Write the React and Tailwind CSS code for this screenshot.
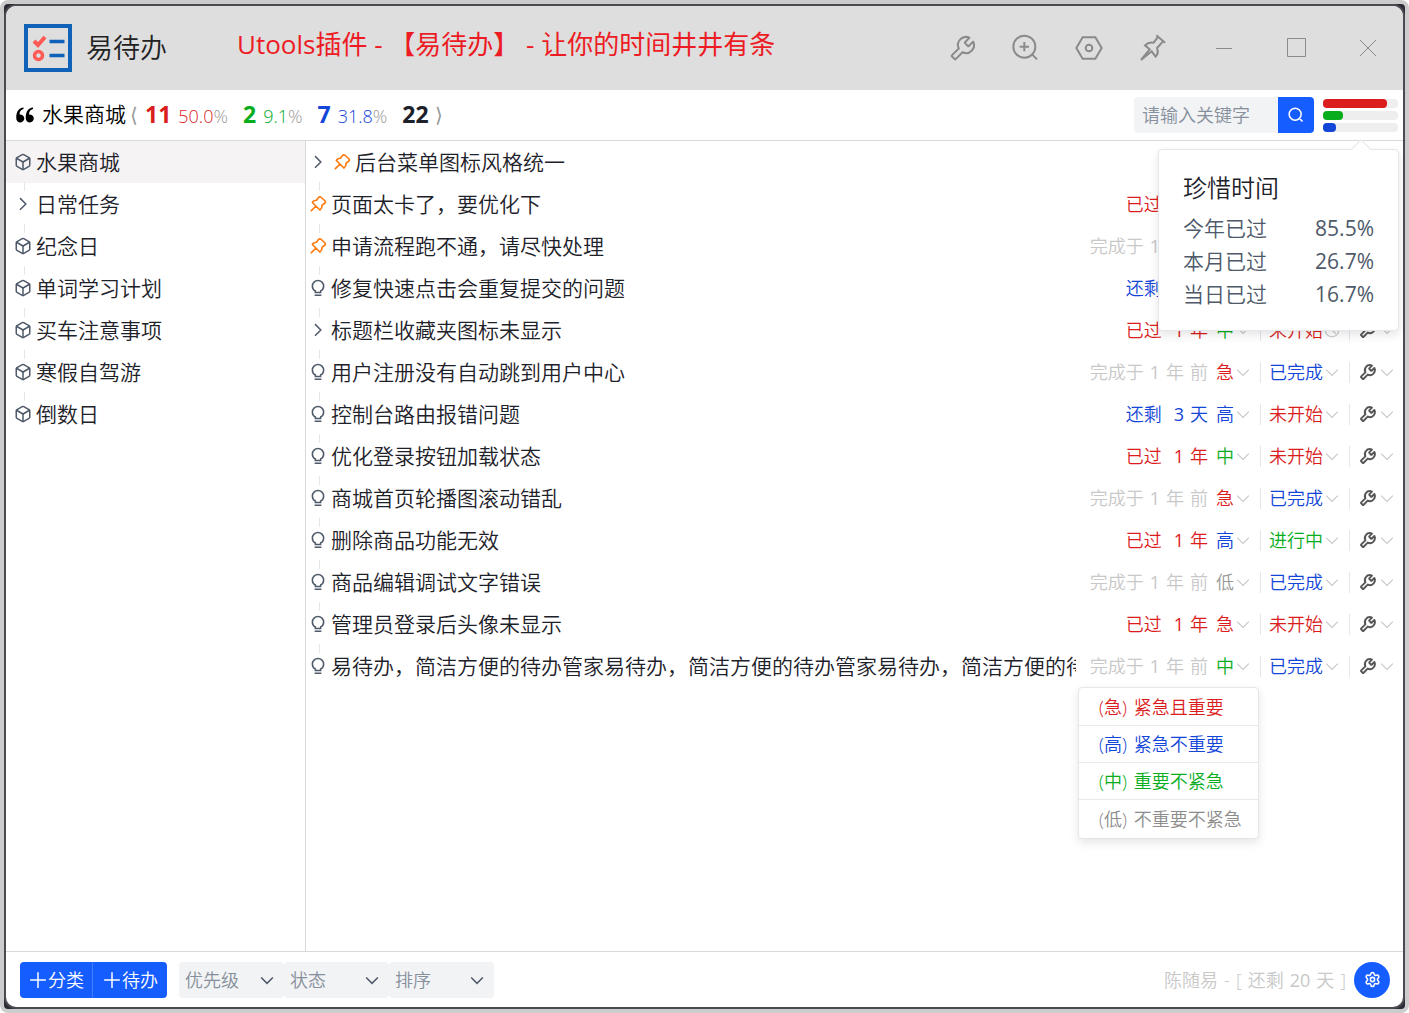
import { Box, Settings } from 'lucide-react';

const VERMELHO = 'text-[#db1d1d]';
const AZUL = 'text-[#1346d8]';
const VERDE = 'text-[#07ad1c]';
const CINZA = 'text-[#999]';

const categories = [
  { name: '水果商城', active: true },
  { name: '日常任务', open: true },
  { name: '纪念日' },
  { name: '单词学习计划' },
  { name: '买车注意事项' },
  { name: '寒假自驾游' },
  { name: '倒数日' },
];

const prioColors = { 急: VERMELHO, 高: AZUL, 中: VERDE, 低: CINZA };
const statusColors = { 未开始: VERMELHO, 已完成: AZUL, 进行中: VERDE };

const todos = [
  { title: '后台菜单图标风格统一', icon: 'right', pin: true },
  { title: '页面太卡了，要优化下', icon: 'pin', time: 'past', prio: '急', status: '未开始' },
  { title: '申请流程跑不通，请尽快处理', icon: 'pin', time: 'done', prio: '急', status: '已完成' },
  { title: '修复快速点击会重复提交的问题', icon: 'bulb', time: 'left', prio: '高', status: '未开始' },
  { title: '标题栏收藏夹图标未显示', icon: 'right', time: 'past', prio: '中', status: '未开始', clock: true },
  { title: '用户注册没有自动跳到用户中心', icon: 'bulb', time: 'done', prio: '急', status: '已完成' },
  { title: '控制台路由报错问题', icon: 'bulb', time: 'left', prio: '高', status: '未开始' },
  { title: '优化登录按钮加载状态', icon: 'bulb', time: 'past', prio: '中', status: '未开始' },
  { title: '商城首页轮播图滚动错乱', icon: 'bulb', time: 'done', prio: '急', status: '已完成' },
  { title: '删除商品功能无效', icon: 'bulb', time: 'past', prio: '高', status: '进行中' },
  { title: '商品编辑调试文字错误', icon: 'bulb', time: 'done', prio: '低', status: '已完成' },
  { title: '管理员登录后头像未显示', icon: 'bulb', time: 'past', prio: '急', status: '未开始' },
  {
    title: '易待办，简洁方便的待办管家易待办，简洁方便的待办管家易待办，简洁方便的待办管家',
    icon: 'bulb', time: 'done', prio: '中', status: '已完成', menu: true,
  },
];

const times = {
  past: { style: VERMELHO, label: '已过', count: '1', unit: '年' },
  left: { style: AZUL, label: '还剩', count: '3', unit: '天' },
  done: { style: 'text-[#c8c8c8]', label: '完成于', count: '1', unit: '年', suffix: '前' },
};

const prioMenu = [
  { key: '(急)', label: '紧急且重要', color: VERMELHO },
  { key: '(高)', label: '紧急不重要', color: AZUL },
  { key: '(中)', label: '重要不紧急', color: VERDE },
  { key: '(低)', label: '不重要不紧急', color: 'text-[#8c8c8c]' },
];

function Svg({ className, width = 4, children }) {
  return (
    <svg viewBox="0 0 48 48" fill="none" stroke="currentColor" strokeWidth={width} className={`shrink-0 ${className}`}>
      {children}
    </svg>
  );
}

const Tool = ({ className, width }) => (
  <Svg className={className} width={width}>
    <path d="M19.994 11.035c3.66-3.659 9.094-4.46 13.531-2.405a.1.1 0 0 1 .028.16l-6.488 6.488a1 1 0 0 0 0 1.414l4.243 4.243a1 1 0 0 0 1.414 0l6.488-6.488a.1.1 0 0 1 .16.028c2.056 4.437 1.254 9.872-2.405 13.53-3.695 3.696-9.2 4.477-13.66 2.347L12.923 40.735a1 1 0 0 1-1.414 0L7.266 36.49a1 1 0 0 1 0-1.414l10.382-10.382c-2.13-4.46-1.349-9.965 2.346-13.66Z" />
  </Svg>
);

const Pin = () => (
  <Svg className="size-[18px] text-[#ff7a0f]" width={4.500}>
    <path d="M9 20c2-5 7-6 11-6l5-7q3-3 7-1l11 10q2 3-1 6l-7 5c0 5-2 10-6 13L9 20ZM18 30 5 43" strokeLinejoin="round" />
  </Svg>
);

const Bulb = () => (
  <Svg className="size-[18px] text-[#4e5969]">
    <path d="M15 43h18M17 36v-4c-5-3-8-8-8-13a15 15 0 0 1 30 0c0 5-3 10-8 13v4H17Z" />
  </Svg>
);

const Right = () => (
  <Svg className="size-[18px] text-[#4e5969]">
    <path d="m16 39.513 15.556-15.557L16 8.400" />
  </Svg>
);

const Down = ({ className = 'size-[18px] text-[#c8c8c8]', width = 3 }) => (
  <Svg className={className} width={width}>
    <path d="M39.600 17.443 24.043 33 8.487 17.443" />
  </Svg>
);

const Clock = () => (
  <Svg className="size-[18px] text-[#c8c8c8]" width={3}>
    <circle cx="24" cy="24" r="18" />
    <path d="M24 12v12l10 10" />
  </Svg>
);

const Search = () => (
  <Svg className="size-[18px]">
    <path d="M33.072 33.071c6.248-6.248 6.248-16.379 0-22.627-6.249-6.249-16.38-6.249-22.628 0-6.248 6.248-6.248 16.379 0 22.627 6.248 6.248 16.38 6.248 22.628 0Zm0 0 8.485 8.485" />
  </Svg>
);

const Plus = () => (
  <Svg className="size-[18px]">
    <path d="M3 24h42M24 3v42" />
  </Svg>
);

function Logo() {
  return (
    <svg viewBox="0 0 48 48" fill="none" className="size-12 shrink-0">
      <rect x="2" y="2" width="44" height="44" stroke="#1062b8" strokeWidth="4" />
      <path d="m10 17 4 4 7-8" stroke="#ff5b55" strokeWidth="4" />
      <circle cx="14.500" cy="31.500" r="4" stroke="#ff5b55" strokeWidth="3.500" />
      <path d="M25.500 17.500h15M25.500 31.500h15" stroke="#1062b8" strokeWidth="3.500" />
    </svg>
  );
}

function TitleBar() {
  return (
    <header className="flex h-[84px] shrink-0 items-center bg-[#dedede] pl-[18px] pr-[26px] text-[#8a8a8a]">
      <Logo />
      <h1 className="ml-[14px] text-[27px] text-[#222]">易待办</h1>
      <p className="ml-[70px] whitespace-pre pb-2 text-[26px] font-normal text-[#ed1c24]">Utools插件 - 【易待办】 - 让你的时间井井有条</p>
      <div className="ml-auto flex items-center">
        <button aria-label="工具" className="mr-[30px]"><Tool className="size-8" width={3} /></button>
        <button aria-label="放大" className="mr-8">
          <Svg className="size-8" width={3}>
            <circle cx="23" cy="22" r="16.500" /><path d="m35 34 7 7M16 22h14M23 15v14" />
          </Svg>
        </button>
        <button aria-label="设置" className="mr-8">
          <Svg className="size-8" width={3}>
            <path d="M14.500 8h19L43 24l-9.500 16h-19L5 24Z" /><circle cx="24" cy="24" r="5" />
          </Svg>
        </button>
        <button aria-label="置顶" className="mr-[46px]">
          <Svg className="size-8" width={3}>
            <path d="m29 5 13 11M31 8l-6 8c-5-1-9 0-13 4l7 6L6 42l16-13 6 8c4-4 4-8 2-13l9-10" />
          </Svg>
        </button>
        <button aria-label="最小化" className="mr-[54px]">
          <svg viewBox="0 0 18 18" stroke="currentColor" className="w-[18px]"><path d="M1 9.500h16" /></svg>
        </button>
        <button aria-label="最大化" className="mr-[52px]">
          <svg viewBox="0 0 20 20" fill="none" stroke="currentColor" className="w-5"><path d="M.5.5h18v18H.5z" /></svg>
        </button>
        <button aria-label="关闭">
          <svg viewBox="0 0 18 18" fill="none" stroke="currentColor" className="w-[18px]"><path d="m1 1 16 16M17 1 1 17" /></svg>
        </button>
      </div>
    </header>
  );
}

function Stat({ count, percent, color }) {
  return (
    <span className={`mr-[15px] flex items-baseline ${color}`}>
      <b className="mr-[7px] text-[23px] font-bold">{count}</b>
      <span className="text-lg">{percent}</span>
      <span className={`text-lg ${CINZA}`}>%</span>
    </span>
  );
}

function Summary() {
  return (
    <div className="relative flex h-[51px] shrink-0 items-center border-b border-[#d9d9d9] pl-[10px] pr-[5px]">
      <svg viewBox="0 0 18 16" fill="#000" className="mr-2 w-[18px]">
        <path d="M7.500.5v1.500C5 2.500 3.500 4.500 3.500 7.500a4 4 0 1 1-3.200 3.700C0 5 2.500 1 7.500.5ZM17 .5v1.500c-2.500.5-4 2.500-4 5.500a4 4 0 1 1-3.200 3.700C9.500 5 12 1 17 .5Z" />
      </svg>
      <h2 className="text-[21px] text-black">水果商城</h2>
      <span className={`ml-1 mr-[7px] text-xl ${CINZA}`}>⟨</span>
      <div className="flex items-baseline pb-0.5">
        <Stat count="11" percent="50.0" color={VERMELHO} />
        <Stat count="2" percent="9.1" color={VERDE} />
        <Stat count="7" percent="31.8" color={AZUL} />
        <b className="mr-[6px] text-[23px] font-bold text-[#1d2129]">22</b>
      </div>
      <span className={`text-xl ${CINZA}`}>⟩</span>
      <form className="ml-auto flex h-9" onSubmit={(e) => e.preventDefault()}>
        <input
          type="text"
          aria-label="关键字"
          placeholder="请输入关键字"
          className="w-36 rounded-l-sm bg-[#f2f3f5] px-2 text-lg outline-none placeholder:text-[#86909c]"
        />
        <button aria-label="搜索" className="flex w-9 items-center justify-center rounded-r-sm bg-[#165dff] text-white">
          <Search />
        </button>
      </form>
      <div className="ml-[9px] flex w-[75px] flex-col gap-[3px]">
        <div className="h-[9px] rounded bg-[#eee]"><div className="h-full w-[85%] rounded bg-[#db1d1d]" /></div>
        <div className="h-[9px] rounded bg-[#eee]"><div className="h-full w-[27%] rounded bg-[#07ad1c]" /></div>
        <div className="h-[9px] rounded bg-[#eee]"><div className="h-full w-[17%] rounded bg-[#1346d8]" /></div>
      </div>
      <TimePopover />
    </div>
  );
}

function TimePopover() {
  const rows = [['今年已过', '85.5%'], ['本月已过', '26.7%'], ['当日已过', '16.7%']];
  return (
    <div className="absolute right-1 top-[59px] z-10 w-[241px] rounded border border-[#e5e6eb] bg-white px-6 pb-[19px] pt-5 shadow-[0_4px_10px_rgba(0,0,0,0.1)]">
      <div className="absolute -top-2 right-[30px] size-[14px] rotate-45 border-l border-t border-[#e5e6eb] bg-white" />
      <h3 className="mb-[6px] text-2xl leading-9 text-[#1d2129]">珍惜时间</h3>
      {rows.map(([label, value]) => (
        <div key={label} className="flex justify-between text-[21px] leading-[33px] text-[#4e5969]">
          <span>{label}</span>
          <span className="font-normal">{value}</span>
        </div>
      ))}
    </div>
  );
}

function Sidebar() {
  return (
    <nav className="w-[300px] shrink-0 border-r border-[#d9d9d9]">
      {categories.map((c, i) => (
        <a
          key={c.name}
          href="#"
          className={`relative flex h-[42px] items-center pl-2 text-[21px] text-[#1d2129] ${c.active ? 'bg-[#f5f3f4]' : ''}`}
        >
          {i > 0 && <i className="absolute -top-px left-[18px] h-[9px] w-px bg-[#e5e6eb]" />}
          <span className="mr-1">
            {c.open ? <Right /> : <Box className="size-[18px] text-[#4e5969]" strokeWidth={2} />}
          </span>
          <span className="pt-0.5">{c.name}</span>
        </a>
      ))}
    </nav>
  );
}

function PrioMenu() {
  return (
    <div className="absolute right-[144px] top-[42px] z-10 w-[181px] divide-y divide-[#e9e9ec] rounded border border-[#e5e6eb] bg-white shadow-[0_4px_10px_rgba(0,0,0,0.1)]">
      {prioMenu.map(m => (
        <button key={m.key} className={`flex h-[37px] w-full items-center gap-[7px] whitespace-nowrap pl-5 text-lg first:h-[38px] last:h-[38px] ${m.color}`}>
          <span>{m.key}</span>
          <span>{m.label}</span>
        </button>
      ))}
    </div>
  );
}

function TodoMeta({ todo }) {
  const time = times[todo.time];
  return (
    <div className="ml-[14px] flex shrink-0 items-center text-lg">
      <span className={`flex gap-1.5 ${time.style}`}>
        <span className={time.suffix ? '' : 'mr-1.5'}>{time.label}</span>
        <span className="font-normal">{time.count}</span>
        <span>{time.unit}</span>
        {time.suffix && <span>{time.suffix}</span>}
      </span>
      <button className={`ml-2 flex items-center ${prioColors[todo.prio]}`}>{todo.prio}<Down /></button>
      <span className="mx-2 h-[21px] w-px bg-[#e5e6eb]" />
      <button className={`flex items-center ${statusColors[todo.status]}`}>
        {todo.status}
        {todo.clock ? <Clock /> : <Down />}
      </button>
      <span className="mx-2 h-[21px] w-px bg-[#e5e6eb]" />
      <button aria-label="操作" className="flex items-center text-[#555]">
        <Tool className="size-5" width={4.500} /><Down />
      </button>
    </div>
  );
}

function TodoRow({ todo, first }) {
  return (
    <li className="relative flex h-[42px] items-center pl-[3px] pr-[7px]">
      {!first && <i className="absolute -top-px left-[13px] h-[9px] w-px bg-[#e5e6eb]" />}
      <span className="mr-1 flex shrink-0 items-center gap-[6px]">
        {todo.icon === 'right' && <Right />}
        {todo.icon === 'bulb' && <Bulb />}
        {(todo.icon === 'pin' || todo.pin) && <Pin />}
      </span>
      <span className="min-w-0 flex-1 overflow-hidden whitespace-nowrap pt-0.5 text-[21px] text-[#1d2129]">{todo.title}</span>
      {todo.time && <TodoMeta todo={todo} />}
      {todo.menu && <PrioMenu />}
    </li>
  );
}

function FilterSelect({ label }) {
  return (
    <label className="relative flex h-9 w-[105px] items-center rounded-sm bg-[#f2f3f5]">
      <select aria-label={label} className="h-full w-full appearance-none px-[6px] text-lg text-[#86909c] outline-none">
        <option>{label}</option>
      </select>
      <Down className="pointer-events-none absolute right-2 size-[18px] text-[#4e5969]" width={4} />
    </label>
  );
}

function Footer() {
  return (
    <footer className="flex h-14 shrink-0 items-center border-t border-[#d9d9d9] pl-[14px] pr-[13px]">
      <div className="flex h-9 divide-x divide-[#4080ff] overflow-hidden rounded-sm bg-[#165dff] text-lg text-white">
        <button className="flex items-center gap-px pl-[9px] pr-2"><Plus />分类</button>
        <button className="flex items-center gap-px pl-[10px] pr-[9px]"><Plus />待办</button>
      </div>
      <div className="ml-3 flex">
        <FilterSelect label="优先级" />
        <FilterSelect label="状态" />
        <FilterSelect label="排序" />
      </div>
      <p className="ml-auto mr-2 flex gap-1.5 text-lg text-[#c8c8c8]">
        <span>陈随易</span>
        <span>-</span>
        <span>[</span>
        <span>还剩</span>
        <span className="font-normal">20</span>
        <span>天</span>
        <span>]</span>
      </p>
      <button aria-label="设置" className="flex size-9 items-center justify-center rounded-full bg-[#165dff] text-white">
        <Settings className="size-[17px]" strokeWidth={2.200} />
      </button>
    </footer>
  );
}

export default function App() {
  return (
    <div className="h-screen rounded-lg border-4 border-[#ccc] bg-[#2b2c36] font-['Open_Sans','Noto_Sans_CJK_SC',sans-serif] font-[350]">
      <div className="flex h-full flex-col overflow-hidden rounded-xl border-2 border-[#4a4a50] bg-white">
        <TitleBar />
        <Summary />
        <main className="flex min-h-0 flex-1">
          <Sidebar />
          <ul className="min-w-0 flex-1">
            {todos.map((t, i) => <TodoRow key={t.title} todo={t} first={i === 0} />)}
          </ul>
        </main>
        <Footer />
      </div>
    </div>
  );
}
